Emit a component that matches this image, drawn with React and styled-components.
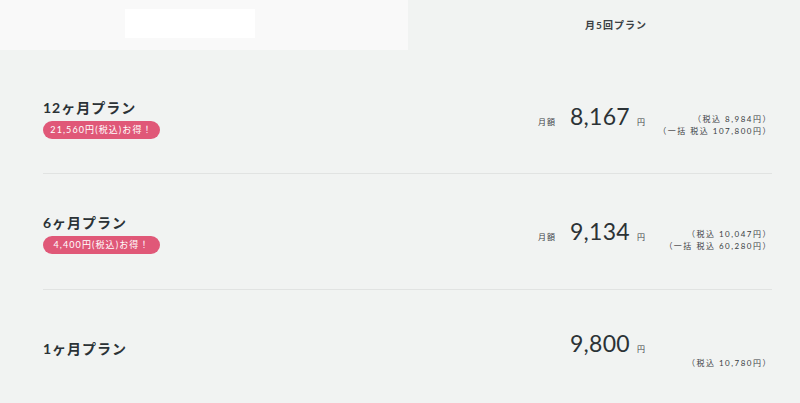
import React from 'react';
import styled, { createGlobalStyle } from 'styled-components';

const GlobalStyle = createGlobalStyle`
  html, body {
    margin: 0;
    padding: 0;
    background: #f1f3f2;
  }
  body {
    font-family: Lato, "Noto Sans CJK JP", sans-serif;
    color: #2b3236;
  }
`;

const Page = styled.div`
  width: 800px;
  height: 403px;
  overflow: hidden;
  background: #f1f3f2;
`;

const Header = styled.div`
  display: flex;
  height: 50px;
`;

const HeaderBlank = styled.div`
  width: 408px;
  background: #f9f9f9;
  padding: 9px 0 0 125px;
  box-sizing: border-box;
`;

const LogoBox = styled.div`
  width: 130px;
  height: 29px;
  background: #ffffff;
`;

const HeaderTitle = styled.div`
  flex: 1;
  padding-left: 24px;
  text-align: center;
  font-size: 10px;
  font-weight: 700;
  letter-spacing: 1px;
  line-height: 50px;
  color: #3a4044;
`;

const List = styled.div`
  padding: 0 28px 0 43px;
`;

const Row = styled.div`
  display: flex;
  align-items: center;
  justify-content: space-between;
  height: ${p => p.$h}px;
  padding-top: ${p => p.$pt}px;
  box-sizing: border-box;
  border-bottom: ${p => (p.$last ? 'none' : '1px solid #e1e3e2')};
`;

const PlanInfo = styled.div`
  display: flex;
  flex-direction: column;
  align-items: flex-start;
`;

const PlanName = styled.div`
  font-size: 14px;
  font-weight: 700;
  letter-spacing: 1px;
  line-height: 20px;
  color: #2b3236;
`;

const Badge = styled.div`
  margin-top: 3px;
  width: 117px;
  height: 18px;
  border-radius: 9px;
  background: #e05878;
  color: #ffffff;
  font-size: 9px;
  letter-spacing: 1.1px;
  line-height: 18px;
  text-align: center;
`;

const PriceArea = styled.div`
  display: flex;
  align-items: flex-start;
`;

const PriceGroup = styled.div`
  display: flex;
  align-items: baseline;
`;

const Label = styled.span`
  font-size: 8px;
  letter-spacing: 1px;
  margin-right: 14px;
  color: #3a4044;
`;

const Amount = styled.span`
  font-size: 23px;
  line-height: 30px;
  letter-spacing: 0.3px;
  color: #2b3236;
`;

const Yen = styled.span`
  font-size: 8px;
  margin-left: 7px;
  color: #3a4044;
`;

const Notes = styled.div`
  width: 127px;
  margin-top: ${p => p.$mt}px;
  text-align: right;
  font-size: 8px;
  line-height: 12px;
  letter-spacing: 1.5px;
  color: #3a4044;
`;

const plans = [
  {
    name: '12ヶ月プラン',
    badge: '21,560円(税込)お得！',
    label: '月額',
    amount: '8,167',
    notes: ['（税込 8,984円）', '（一括 税込 107,800円）'],
    h: 124,
    pt: 14,
    mt: 12,
  },
  {
    name: '6ヶ月プラン',
    badge: '4,400円(税込)お得！',
    label: '月額',
    amount: '9,134',
    notes: ['（税込 10,047円）', '（一括 税込 60,280円）'],
    h: 116,
    pt: 4,
    mt: 12,
  },
  {
    name: '1ヶ月プラン',
    amount: '9,800',
    notes: ['（税込 10,780円）'],
    h: 113,
    pt: 4,
    mt: 29,
    last: true,
  },
];

export default function App() {
  return (
    <Page>
      <GlobalStyle />
      <Header>
        <HeaderBlank>
          <LogoBox />
        </HeaderBlank>
        <HeaderTitle>月5回プラン</HeaderTitle>
      </Header>
      <List>
        {plans.map(plan => (
          <Row key={plan.name} $h={plan.h} $pt={plan.pt} $last={plan.last}>
            <PlanInfo>
              <PlanName>{plan.name}</PlanName>
              {plan.badge && <Badge>{plan.badge}</Badge>}
            </PlanInfo>
            <PriceArea>
              <PriceGroup>
                {plan.label && <Label>{plan.label}</Label>}
                <Amount>{plan.amount}</Amount>
                <Yen>円</Yen>
              </PriceGroup>
              <Notes $mt={plan.mt}>
                {plan.notes.map(n => (
                  <div key={n}>{n}</div>
                ))}
              </Notes>
            </PriceArea>
          </Row>
        ))}
      </List>
    </Page>
  );
}
